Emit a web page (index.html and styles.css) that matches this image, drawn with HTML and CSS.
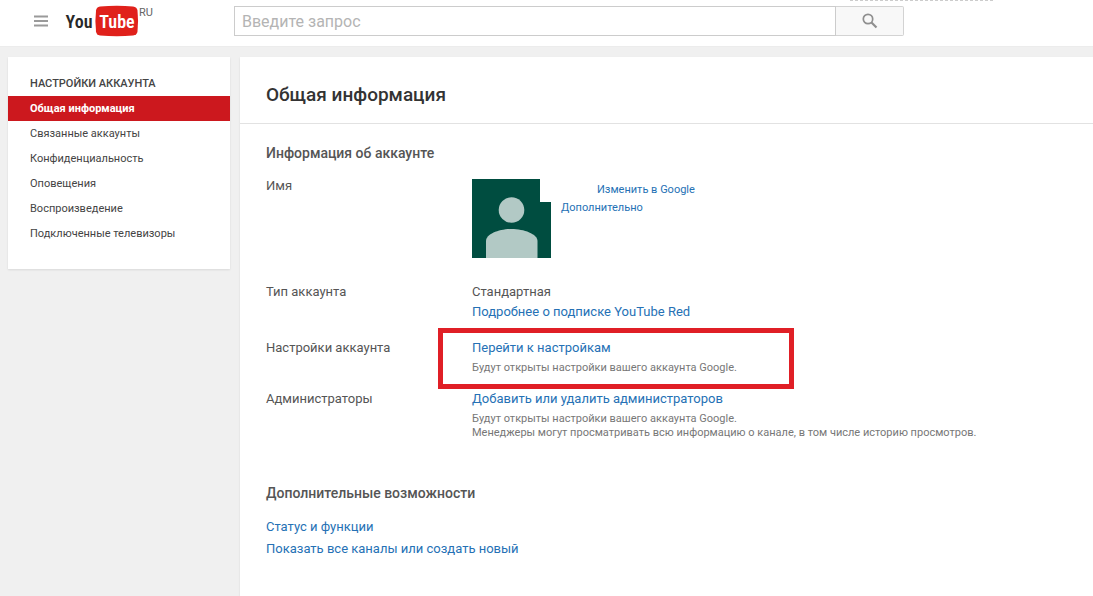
FILE: index.html
```
<!DOCTYPE html>
<html lang="ru">
<head>
    <meta charset="UTF-8">
    <meta name="viewport" content="width=device-width, initial-scale=1.0">
    <title>Общая информация - YouTube</title>
    <link rel="stylesheet" href="styles.css">
</head>
<body>
    <header class="masthead">
        <div class="masthead-left">
            <button type="button" class="guide-button" aria-label="Меню">
                <svg width="14" height="12" viewBox="0 0 14 12">
                    <path d="M0 1.5h14M0 6h14M0 10.5h14" stroke="#9a9a9a" stroke-width="1.8"/>
                </svg>
            </button>
            <a href="#" class="logo" aria-label="YouTube">
                <svg width="74" height="32" viewBox="0 0 74 32">
                    <path d="M31 5.500Q31.500 2 35 1.500Q52 0 68 1.500Q72 2 72.500 5.500Q73.600 16 72.500 26.500Q72 30 68 30.500Q52 32 35 30.500Q31.500 30 31 26.500Q29.800 16 31 5.500Z" fill="#e0211b"/>
                    <text x="14" y="23" text-anchor="middle" class="logo-you">You</text>
                    <text x="52" y="23" text-anchor="middle" class="logo-tube">Tube</text>
                </svg>
            </a>
            <span class="region">RU</span>
        </div>
        <form class="search">
            <input type="text" class="search-input" placeholder="Введите запрос" aria-label="Введите запрос">
            <button type="submit" class="search-button" aria-label="Поиск">
                <svg width="16" height="16" viewBox="0 0 16 16" fill="none" stroke="#8f8f8f">
                    <circle cx="6" cy="6" r="4.700" stroke-width="1.700"/>
                    <path d="M9.500 9.500L14.500 14.500" stroke-width="2.200"/>
                </svg>
            </button>
        </form>
        <div class="dotted-line"></div>
    </header>

    <div class="page">
        <nav class="sidebar">
            <h3 class="sidebar-title">Настройки аккаунта</h3>
            <a href="#" class="sidebar-link active">Общая информация</a>
            <a href="#" class="sidebar-link">Связанные аккаунты</a>
            <a href="#" class="sidebar-link">Конфиденциальность</a>
            <a href="#" class="sidebar-link">Оповещения</a>
            <a href="#" class="sidebar-link">Воспроизведение</a>
            <a href="#" class="sidebar-link">Подключенные телевизоры</a>
        </nav>

        <main class="content">
            <h1 class="content-title">Общая информация</h1>

            <section class="section">
                <h2 class="section-title">Информация об аккаунте</h2>

                <div class="row row-name">
                    <div class="label">Имя</div>
                    <div class="value profile">
                        <svg width="79" height="79" viewBox="0 0 79 79">
                            <path d="M0 0H68V23H79V79H0Z" fill="#004d40"/>
                            <circle cx="39.500" cy="31" r="12.800" fill="#b2c9c5"/>
                            <path d="M14 79V62C14 55 27 50 39.500 50S65.500 55 65.500 62V79Z" fill="#b2c9c5"/>
                        </svg>
                        <div class="profile-links">
                            <a href="#" class="edit-link">Изменить в Google</a>
                            <a href="#">Дополнительно</a>
                        </div>
                    </div>
                </div>

                <div class="row row-type">
                    <div class="label">Тип аккаунта</div>
                    <div class="value">
                        <div>Стандартная</div>
                        <a href="#">Подробнее о подписке YouTube Red</a>
                    </div>
                </div>

                <div class="row">
                    <div class="label">Настройки аккаунта</div>
                    <div class="value">
                        <a href="#">Перейти к настройкам</a>
                        <p class="note">Будут открыты настройки вашего аккаунта Google.</p>
                        <div class="highlight"></div>
                    </div>
                </div>

                <div class="row">
                    <div class="label">Администраторы</div>
                    <div class="value">
                        <a href="#">Добавить или удалить администраторов</a>
                        <p class="note">Будут открыты настройки вашего аккаунта Google.<br>Менеджеры могут просматривать всю информацию о канале, в том числе историю просмотров.</p>
                    </div>
                </div>
            </section>

            <section class="section">
                <h2 class="section-title">Дополнительные возможности</h2>
                <ul class="links">
                    <li><a href="#">Статус и функции</a></li>
                    <li><a href="#">Показать все каналы или создать новый</a></li>
                </ul>
            </section>
        </main>
    </div>
</body>
</html>
```
FILE: styles.css
```
* {
    box-sizing: border-box;
}

body {
    margin: 0;
    min-height: 100vh;
    display: flex;
    flex-direction: column;
    font-family: Roboto, Arial, sans-serif;
    font-size: 13px;
    line-height: 20px;
    color: #555;
    background-color: #f0f0f0;
}

h1, h2, h3, p, ul {
    margin: 0;
    padding: 0;
}

a {
    color: #2571b5;
    text-decoration: none;
}

a:hover {
    text-decoration: underline;
}

svg {
    display: block;
}

/* header */
.masthead {
    position: relative;
    display: flex;
    padding: 4px 0 8px;
    background-color: #fff;
    border-bottom: 1px solid #ececec;
}

.masthead-left {
    display: flex;
    align-items: center;
    width: 234px;
    height: 34px;
    padding-left: 34px;
}

.guide-button {
    padding: 0;
    margin-right: 17px;
    border: none;
    background: none;
    cursor: pointer;
}

.logo-you, .logo-tube {
    font-family: "Roboto Condensed", "Liberation Sans Narrow", "DejaVu Sans Condensed", sans-serif;
    font-size: 18px;
    font-weight: 600;
}

.logo-you {
    fill: #282828;
}

.logo-tube {
    fill: #fff;
}

.region {
    align-self: flex-start;
    font-size: 11px;
    line-height: 18px;
    color: #666;
}

.search {
    display: flex;
    width: 670px;
    height: 30px;
    margin-top: 2px;
}

.search-input {
    flex: 1;
    min-width: 0;
    padding: 0 7px;
    border: 1px solid #ccc;
    font-family: inherit;
    font-size: 16px;
    color: #333;
}

.search-input::placeholder {
    color: #b4b4b4;
}

.search-button {
    display: flex;
    align-items: center;
    justify-content: center;
    width: 68px;
    padding: 0;
    border: 1px solid #d3d3d3;
    border-left: none;
    border-radius: 0 2px 2px 0;
    background-color: #f8f8f8;
    cursor: pointer;
}

.dotted-line {
    position: absolute;
    top: 0;
    right: 100px;
    width: 143px;
    border-top: 1px dashed #ccc;
}

/* page */
.page {
    flex: 1;
    display: flex;
    align-items: flex-start;
    gap: 10px;
    padding: 10px 0 0 8px;
}

.sidebar {
    width: 222px;
    padding: 14px 0 23px;
    background-color: #fff;
    box-shadow: 0 1px 2px rgba(0, 0, 0, 0.1);
}

.sidebar-title, .sidebar-link {
    display: block;
    padding: 0 22px;
    font-size: 11px;
    line-height: 25px;
    color: #444;
}

.sidebar-title {
    font-weight: 500;
    text-transform: uppercase;
}

.sidebar-link.active {
    background-color: #cc181e;
    color: #fff;
    font-weight: bold;
}

.content {
    flex: 1;
    align-self: stretch;
    background-color: #fff;
    box-shadow: 0 1px 2px rgba(0, 0, 0, 0.1);
}

.content-title {
    padding: 25px 26px 15px;
    border-bottom: 1px solid #e2e2e2;
    font-size: 19px;
    font-weight: 500;
    line-height: 26px;
    color: #333;
}

.section {
    padding: 19px 26px 10px;
}

.section-title {
    margin-bottom: 13px;
    font-size: 14px;
    font-weight: 500;
    line-height: 20px;
}

.row {
    display: flex;
    margin-bottom: 14px;
}

.row-name {
    margin-bottom: 24px;
}

.row-type {
    margin-bottom: 16px;
}

.label {
    width: 206px;
}

.value {
    position: relative;
    flex: 1;
}

.profile {
    display: flex;
    gap: 10px;
    padding-top: 3px;
}

.profile-links {
    display: flex;
    flex-direction: column;
    padding-top: 2px;
    font-size: 11px;
    line-height: 18px;
}

.edit-link {
    padding-left: 36px;
}

.note {
    margin-top: 3px;
    font-size: 11px;
    line-height: 14px;
    color: #777;
}

.highlight {
    position: absolute;
    top: -10px;
    left: -34px;
    width: 356px;
    height: 61px;
    border: 5px solid #e01f26;
    pointer-events: none;
}

.links {
    list-style: none;
    line-height: 22px;
}
```
